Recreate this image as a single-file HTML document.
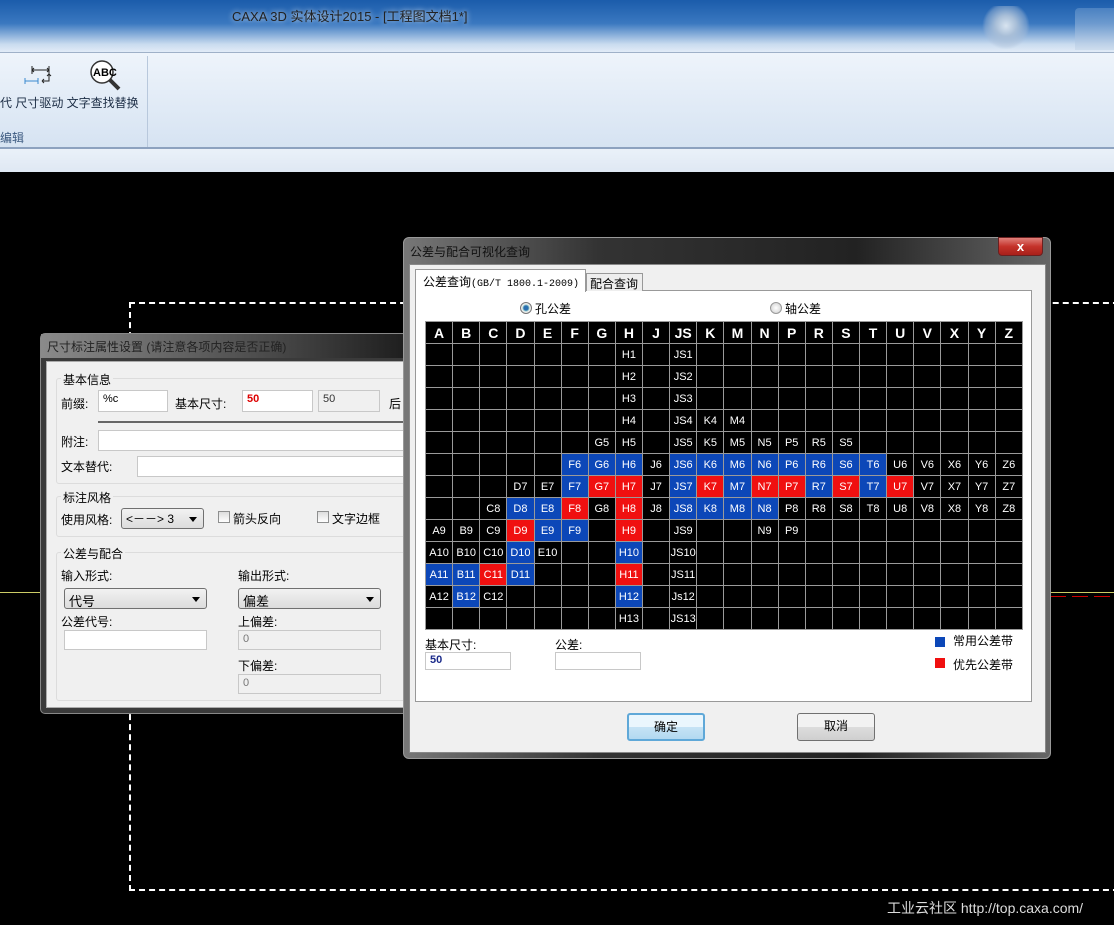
<!DOCTYPE html>
<html><head><meta charset="utf-8">
<style>
*{margin:0;padding:0;box-sizing:border-box}
body{width:1114px;height:925px;background:#000;position:relative;overflow:hidden;font-family:"Liberation Sans","Noto Sans CJK SC",sans-serif;font-size:12px;color:#000}
.a{position:absolute;white-space:nowrap}
.inp{position:absolute;background:#fff;border:1px solid #c8c8c8;font-size:11px;padding:2px 4px}
.dis{background:#f0f0f0;color:#777}
.combo{position:absolute;border:1px solid #707070;border-radius:3px;background:linear-gradient(#f2f2f2,#dcdcdc);padding:2px 4px;font-size:13px}
.combo:after{content:"";position:absolute;right:6px;top:8px;border-left:4px solid transparent;border-right:4px solid transparent;border-top:5px solid #000}
.grp{position:absolute;border:1px solid #dcdcdc;border-radius:3px}
.gl{position:absolute;background:#f0f0f0;padding:0 2px;font-size:12px}
.chk{position:absolute;width:12px;height:12px;border:1px solid #8e8f8f;background:linear-gradient(#ddd,#fff)}
table{position:absolute;left:425px;top:321px;border-collapse:collapse;table-layout:fixed;width:598px;background:#000}
td{border:1px solid #9a9a9a;height:22px;color:#fff;text-align:center;font-size:11px;width:27px;padding:0;overflow:hidden}
tr.h td{height:22px;font-weight:bold;font-size:14px}
td.b{background:#0c47b8}
td.r{background:#f01010}
.btn{position:absolute;border:1px solid #707070;border-radius:3px;background:linear-gradient(#f2f2f2 50%,#dddddd 50%,#cfcfcf);text-align:center;font-size:12px;line-height:25px}
</style></head><body>
<!-- title bar -->
<div class="a" style="left:0;top:0;width:1114px;height:52px;background:linear-gradient(#1b5cab 0%,#3a78c0 45%,#c9dbef 85%,#e2ecf7 100%)"></div>
<div class="a" style="left:232px;top:6px;font-size:13px;color:#222;text-shadow:0 0 6px #fff">CAXA 3D 实体设计2015 - [工程图文档1*]</div>
<div class="a" style="left:982px;top:6px;width:48px;height:44px;background:radial-gradient(circle at 50% 45%,#d8e4f0 0,#a9bfd8 30%,rgba(170,190,215,.4) 60%,transparent 70%)"></div>
<div class="a" style="left:1075px;top:8px;width:39px;height:42px;background:linear-gradient(#5a8dc8,#c8d8ea);opacity:.7;border-radius:4px 0 0 0"></div>
<!-- ribbon -->
<div class="a" style="left:0;top:52px;width:1114px;height:1px;background:#9fb1c8"></div>
<div class="a" style="left:0;top:53px;width:1114px;height:95px;background:linear-gradient(#eef4fb,#d6e3f2)"></div>
<div class="a" style="left:147px;top:56px;width:1px;height:92px;background:#b8c8dc"></div>
<div class="a" style="left:0;top:147px;width:1114px;height:2px;background:#8da2bf"></div>
<div class="a" style="left:0;top:149px;width:1114px;height:23px;background:linear-gradient(#eaf1f9,#dfe8f3)"></div>
<svg class="a" style="left:22px;top:62px" width="36" height="28" viewBox="0 0 36 28">
<path d="M10 4v8M27 4v8M10 8h17M12 6l-2 2 2 2M25 6l2 2-2 2" stroke="#222" fill="none" stroke-width="1"/>
<path d="M3 16v6M16 16v6M3 19h13" stroke="#3a8ad0" fill="none"/>
<path d="M27 12v7h-6M20 19l2-2M20 19l2 2M27 12l-2 2M27 12l2 2" stroke="#222" fill="none"/>
</svg>
<svg class="a" style="left:88px;top:58px" width="36" height="36" viewBox="0 0 36 36">
<circle cx="14" cy="14" r="11" fill="#fff" stroke="#333" stroke-width="1.5"/>
<text x="5" y="18" font-size="11" font-weight="bold" font-family="Liberation Sans">ABC</text>
<path d="M22 22l9 9" stroke="#333" stroke-width="4"/>
</svg>
<div class="a" style="left:0;top:94px;font-size:12px;color:#1b2c44">代 尺寸驱动 文字查找替换</div>
<div class="a" style="left:0;top:129px;font-size:12px;color:#3c5a80">编辑</div>
<!-- canvas lines -->
<div class="a" style="left:129px;top:302px;width:1000px;height:589px;border:2px dashed #fff"></div>
<div class="a" style="left:0;top:592px;width:44px;height:1px;background:#cccc66"></div>
<div class="a" style="left:1050px;top:592px;width:64px;height:1px;background:#cccc66"></div>
<div class="a" style="left:1050px;top:596px;width:64px;height:1px;background:repeating-linear-gradient(90deg,#c00 0 16px,transparent 16px 22px)"></div>
<div class="a" style="left:887px;top:898px;font-size:14px;color:#ddd">工业云社区 http://top.caxa.com/</div>

<!-- left dialog -->
<div class="a" style="left:40px;top:333px;width:380px;height:381px;background:#3a3a3a;border:1px solid #888;border-radius:5px"></div>
<div class="a" style="left:41px;top:334px;width:378px;height:24px;background:linear-gradient(90deg,#8a8a8a,#4a4a4a 60%,#1a1a1a)"></div>
<div class="a" style="left:47px;top:338px;font-size:12px;color:#222">尺寸标注属性设置 (请注意各项内容是否正确)</div>
<div class="a" style="left:46px;top:361px;width:374px;height:347px;background:#f0f0f0;border:1px solid #aaa"></div>
<div class="grp" style="left:56px;top:378px;width:370px;height:106px"></div>
<div class="gl" style="left:61px;top:371px">基本信息</div>
<div class="a" style="left:61px;top:395px;font-size:12px">前缀:</div>
<div class="inp" style="left:98px;top:390px;width:70px;height:22px">%c</div>
<div class="a" style="left:175px;top:395px;font-size:12px">基本尺寸:</div>
<div class="inp" style="left:242px;top:390px;width:71px;height:22px;color:#d00;font-weight:bold">50</div>
<div class="inp dis" style="left:318px;top:390px;width:62px;height:22px;color:#333">50</div>
<div class="a" style="left:389px;top:395px;font-size:12px">后</div>
<div class="a" style="left:98px;top:421px;width:320px;height:2px;background:#666"></div>
<div class="a" style="left:61px;top:433px;font-size:12px">附注:</div>
<div class="inp" style="left:98px;top:430px;width:320px;height:21px"></div>
<div class="a" style="left:61px;top:458px;font-size:12px">文本替代:</div>
<div class="inp" style="left:137px;top:456px;width:280px;height:21px"></div>
<div class="grp" style="left:56px;top:496px;width:370px;height:41px"></div>
<div class="gl" style="left:61px;top:489px">标注风格</div>
<div class="a" style="left:61px;top:511px;font-size:12px">使用风格:</div>
<div class="combo" style="left:121px;top:508px;width:83px;height:21px;font-size:12px;padding-top:1px">&lt;－－&gt; 3</div>
<div class="chk" style="left:218px;top:511px"></div>
<div class="a" style="left:233px;top:510px;font-size:12px">箭头反向</div>
<div class="chk" style="left:317px;top:511px"></div>
<div class="a" style="left:332px;top:510px;font-size:12px">文字边框</div>
<div class="grp" style="left:56px;top:552px;width:370px;height:149px"></div>
<div class="gl" style="left:61px;top:545px">公差与配合</div>
<div class="a" style="left:61px;top:567px;font-size:12px">输入形式:</div>
<div class="a" style="left:238px;top:567px;font-size:12px">输出形式:</div>
<div class="combo" style="left:64px;top:588px;width:143px;height:21px">代号</div>
<div class="combo" style="left:238px;top:588px;width:143px;height:21px">偏差</div>
<div class="a" style="left:61px;top:613px;font-size:12px">公差代号:</div>
<div class="a" style="left:238px;top:613px;font-size:12px">上偏差:</div>
<div class="inp" style="left:64px;top:630px;width:143px;height:20px"></div>
<div class="inp dis" style="left:238px;top:630px;width:143px;height:20px">0</div>
<div class="a" style="left:238px;top:657px;font-size:12px">下偏差:</div>
<div class="inp dis" style="left:238px;top:674px;width:143px;height:20px">0</div>

<!-- right dialog -->
<div class="a" style="left:403px;top:237px;width:648px;height:522px;background:linear-gradient(90deg,#777,#333 30%,#222 70%,#666);border:1px solid #999;border-radius:6px"></div>
<div class="a" style="left:410px;top:243px;font-size:12px;color:#111">公差与配合可视化查询</div>
<div class="a" style="left:998px;top:237px;width:45px;height:19px;background:linear-gradient(#e0807a,#c4322a 50%,#a8201a);border:1px solid #6a2020;border-radius:0 0 4px 4px;color:#fff;text-align:center;font-weight:bold;font-size:13px;line-height:17px">x</div>
<div class="a" style="left:409px;top:264px;width:637px;height:489px;background:#f0f0f0;border:1px solid #888"></div>
<div class="a" style="left:415px;top:290px;width:617px;height:412px;background:#fff;border:1px solid #999"></div>
<div class="a" style="left:415px;top:269px;width:171px;height:23px;background:#fff;border:1px solid #999;border-bottom:none"></div>
<div class="a" style="left:423px;top:273px;font-size:12px">公差查询<span style="font-family:'Liberation Mono',monospace;font-size:10px">(GB/T 1800.1-2009)</span></div>
<div class="a" style="left:586px;top:273px;width:57px;height:18px;background:#eee;border:1px solid #999;border-bottom:none"></div>
<div class="a" style="left:590px;top:275px;font-size:12px">配合查询</div>
<div class="a" style="left:520px;top:302px;width:12px;height:12px;border-radius:50%;border:1px solid #777;background:radial-gradient(#2a6fb0 30%,#9cc 45%,#eee 55%)"></div>
<div class="a" style="left:535px;top:300px;font-size:12px">孔公差</div>
<div class="a" style="left:770px;top:302px;width:12px;height:12px;border-radius:50%;border:1px solid #999;background:radial-gradient(#fff,#ccc)"></div>
<div class="a" style="left:785px;top:300px;font-size:12px">轴公差</div>

<table>
<tr class="h"><td>A</td><td>B</td><td>C</td><td>D</td><td>E</td><td>F</td><td>G</td><td>H</td><td>J</td><td>JS</td><td>K</td><td>M</td><td>N</td><td>P</td><td>R</td><td>S</td><td>T</td><td>U</td><td>V</td><td>X</td><td>Y</td><td>Z</td></tr>
<tr><td></td><td></td><td></td><td></td><td></td><td></td><td></td><td>H1</td><td></td><td>JS1</td><td></td><td></td><td></td><td></td><td></td><td></td><td></td><td></td><td></td><td></td><td></td><td></td></tr>
<tr><td></td><td></td><td></td><td></td><td></td><td></td><td></td><td>H2</td><td></td><td>JS2</td><td></td><td></td><td></td><td></td><td></td><td></td><td></td><td></td><td></td><td></td><td></td><td></td></tr>
<tr><td></td><td></td><td></td><td></td><td></td><td></td><td></td><td>H3</td><td></td><td>JS3</td><td></td><td></td><td></td><td></td><td></td><td></td><td></td><td></td><td></td><td></td><td></td><td></td></tr>
<tr><td></td><td></td><td></td><td></td><td></td><td></td><td></td><td>H4</td><td></td><td>JS4</td><td>K4</td><td>M4</td><td></td><td></td><td></td><td></td><td></td><td></td><td></td><td></td><td></td><td></td></tr>
<tr><td></td><td></td><td></td><td></td><td></td><td></td><td>G5</td><td>H5</td><td></td><td>JS5</td><td>K5</td><td>M5</td><td>N5</td><td>P5</td><td>R5</td><td>S5</td><td></td><td></td><td></td><td></td><td></td><td></td></tr>
<tr><td></td><td></td><td></td><td></td><td></td><td class="b">F6</td><td class="b">G6</td><td class="b">H6</td><td>J6</td><td class="b">JS6</td><td class="b">K6</td><td class="b">M6</td><td class="b">N6</td><td class="b">P6</td><td class="b">R6</td><td class="b">S6</td><td class="b">T6</td><td>U6</td><td>V6</td><td>X6</td><td>Y6</td><td>Z6</td></tr>
<tr><td></td><td></td><td></td><td>D7</td><td>E7</td><td class="b">F7</td><td class="r">G7</td><td class="r">H7</td><td>J7</td><td class="b">JS7</td><td class="r">K7</td><td class="b">M7</td><td class="r">N7</td><td class="r">P7</td><td class="b">R7</td><td class="r">S7</td><td class="b">T7</td><td class="r">U7</td><td>V7</td><td>X7</td><td>Y7</td><td>Z7</td></tr>
<tr><td></td><td></td><td>C8</td><td class="b">D8</td><td class="b">E8</td><td class="r">F8</td><td>G8</td><td class="r">H8</td><td>J8</td><td class="b">JS8</td><td class="b">K8</td><td class="b">M8</td><td class="b">N8</td><td>P8</td><td>R8</td><td>S8</td><td>T8</td><td>U8</td><td>V8</td><td>X8</td><td>Y8</td><td>Z8</td></tr>
<tr><td>A9</td><td>B9</td><td>C9</td><td class="r">D9</td><td class="b">E9</td><td class="b">F9</td><td></td><td class="r">H9</td><td></td><td>JS9</td><td></td><td></td><td>N9</td><td>P9</td><td></td><td></td><td></td><td></td><td></td><td></td><td></td><td></td></tr>
<tr><td>A10</td><td>B10</td><td>C10</td><td class="b">D10</td><td>E10</td><td></td><td></td><td class="b">H10</td><td></td><td>JS10</td><td></td><td></td><td></td><td></td><td></td><td></td><td></td><td></td><td></td><td></td><td></td><td></td></tr>
<tr><td class="b">A11</td><td class="b">B11</td><td class="r">C11</td><td class="b">D11</td><td></td><td></td><td></td><td class="r">H11</td><td></td><td>JS11</td><td></td><td></td><td></td><td></td><td></td><td></td><td></td><td></td><td></td><td></td><td></td><td></td></tr>
<tr><td>A12</td><td class="b">B12</td><td>C12</td><td></td><td></td><td></td><td></td><td class="b">H12</td><td></td><td>Js12</td><td></td><td></td><td></td><td></td><td></td><td></td><td></td><td></td><td></td><td></td><td></td><td></td></tr>
<tr><td></td><td></td><td></td><td></td><td></td><td></td><td></td><td>H13</td><td></td><td>JS13</td><td></td><td></td><td></td><td></td><td></td><td></td><td></td><td></td><td></td><td></td><td></td><td></td></tr>
</table>

<div class="a" style="left:425px;top:636px;font-size:12px">基本尺寸:</div>
<div class="inp" style="left:425px;top:652px;width:86px;height:18px;color:#1a2a8a;font-weight:bold;padding-top:1px">50</div>
<div class="a" style="left:555px;top:636px;font-size:12px">公差:</div>
<div class="inp" style="left:555px;top:652px;width:86px;height:18px"></div>
<div class="a" style="left:935px;top:637px;width:10px;height:10px;background:#0c47b8"></div>
<div class="a" style="left:953px;top:632px;font-size:12px">常用公差带</div>
<div class="a" style="left:935px;top:658px;width:10px;height:10px;background:#f01010"></div>
<div class="a" style="left:953px;top:656px;font-size:12px">优先公差带</div>
<div class="btn" style="left:627px;top:713px;width:78px;height:28px;border:2px solid #5fa8d8;background:linear-gradient(#eaf6fd 50%,#c6e3f5 50%,#b2d9f1)">确定</div>
<div class="btn" style="left:797px;top:713px;width:78px;height:28px">取消</div>
</body></html>
